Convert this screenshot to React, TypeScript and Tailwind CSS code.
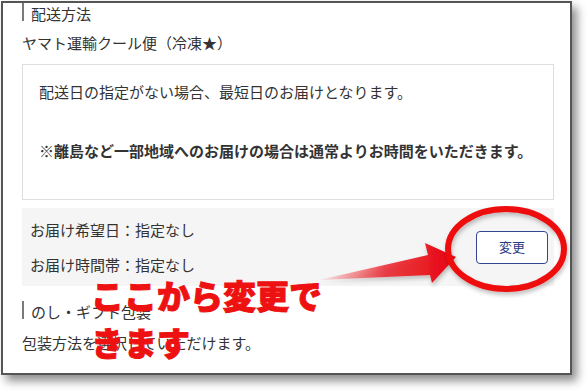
import React from 'react'

const jp = { fontFamily: '"Noto Sans CJK JP", "Noto Sans", sans-serif' }

function SectionTitle({ children }: { children: React.ReactNode }) {
  return (
    <div className="flex items-start h-[22px]">
      <span className="block w-[2px] h-[18px] bg-[#7a7a7a]" />
      <span className="pl-[7px] text-[15px] leading-[22px] text-[#333]">{children}</span>
    </div>
  )
}

// red annotation layer drawn over the screenshot
function Annotation() {
  return (
    <>
      <svg
        className="absolute left-0 top-0 pointer-events-none"
        width="588"
        height="391"
        viewBox="0 0 588 391"
      >
        <defs>
          <linearGradient id="arrowFill" x1="319" y1="0" x2="440" y2="0" gradientUnits="userSpaceOnUse">
            <stop offset="0" stopColor="#f2222a" stopOpacity="0.05" />
            <stop offset="0.55" stopColor="#ea1c24" stopOpacity="0.8" />
            <stop offset="1" stopColor="#e8101a" />
          </linearGradient>
          <filter id="soft" x="-20%" y="-20%" width="140%" height="160%">
            <feDropShadow dx="1" dy="3" stdDeviation="2" floodColor="#000" floodOpacity="0.25" />
          </filter>
        </defs>
        <path
          d="M319 280 L428 255 L425 243 L456 257 L432 283 L430 275 Z"
          fill="url(#arrowFill)"
          filter="url(#soft)"
        />
        <ellipse
          cx="506"
          cy="249"
          rx="58"
          ry="40"
          fill="none"
          stroke="#ee0a0a"
          strokeWidth="6"
          filter="url(#soft)"
        />
      </svg>
      <div
        className="absolute left-[91px] top-[272px] text-[33px] leading-[47px] font-black text-[#ee1111] [-webkit-text-stroke:1px_#ee1111]"
        style={jp}
      >
        <div>ここから変更で</div>
        <div>きます</div>
      </div>
    </>
  )
}

export default function App() {
  return (
    <div className="relative w-[588px] h-[391px] bg-white overflow-hidden" style={jp}>
      <div className="ml-[1px] mt-[1px] w-[571px] h-[374px] border-2 border-[#555] bg-white shadow-[5px_6px_9px_rgba(0,0,0,0.45)] overflow-hidden">
        <div className="pl-[19px] pr-[16px] text-[#333]">
          <SectionTitle>配送方法</SectionTitle>

          <p className="mt-[7px] text-[15px] leading-[22px]">ヤマト運輸クール便（冷凍★）</p>

          <div className="mt-[10px] border border-[#dedede] pl-[16px] pt-[16px] pb-[37px]">
            <p className="text-[15px] leading-[22px]">配送日の指定がない場合、最短日のお届けとなります。</p>
            <p className="mt-[37px] text-[15px] leading-[22px] font-bold">
              ※離島など一部地域へのお届けの場合は通常よりお時間をいただきます。
            </p>
          </div>

          <div className="mt-[8px] h-[78px] bg-[#f5f5f5] flex items-center justify-between pl-[8px] pr-[6px]">
            <div className="flex flex-col gap-[13px] text-[15px] leading-[22px]">
              <p>お届け希望日：指定なし</p>
              <p>お届け時間帯：指定なし</p>
            </div>
            <button className="w-[72px] h-[33px] rounded-[4px] border border-[#34468f] bg-white text-[13px] text-[#2d3b85]">
              変更
            </button>
          </div>

          <div className="mt-[15px]">
            <SectionTitle>のし・ギフト包装</SectionTitle>
          </div>

          <p className="mt-[9px] text-[15px] leading-[22px]">包装方法を選択していただけます。</p>
        </div>
      </div>
      <Annotation />
    </div>
  )
}
